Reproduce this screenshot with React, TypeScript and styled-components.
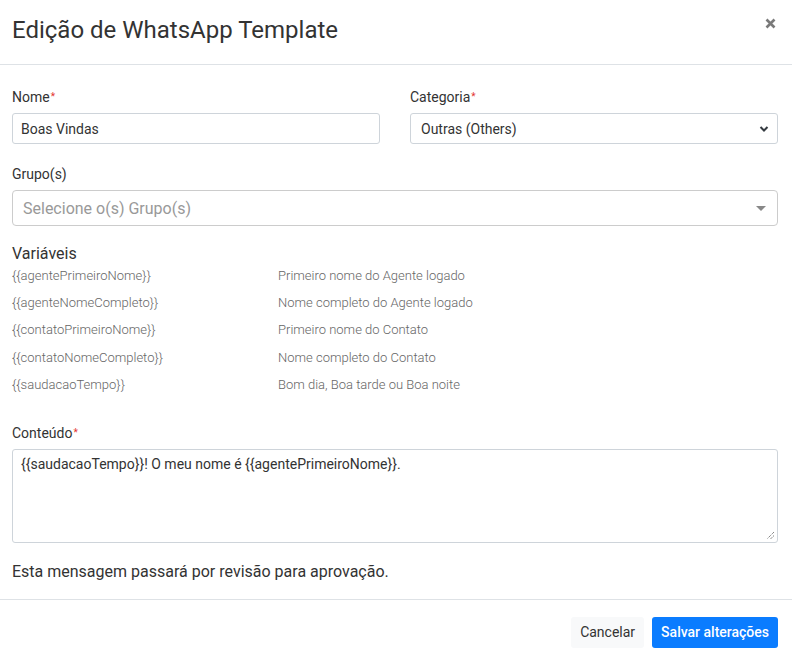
import React from "react";
import styled, { createGlobalStyle } from "styled-components";

const Global = createGlobalStyle`
  html, body { margin: 0; padding: 0; background: #fff; }
  body { font-family: Roboto, "Liberation Sans", sans-serif; color: #333; }
  * { box-sizing: border-box; }
`;

const Modal = styled.div`
  width: 792px;
  height: 661px;
  background: #fff;
  display: flex;
  flex-direction: column;
`;

const Header = styled.div`
  height: 65px;
  border-bottom: 1px solid #dee2e6;
  display: flex;
  align-items: center;
  justify-content: space-between;
  padding: 0 15px 4px 12px;
`;

const Title = styled.h4`
  margin: 0;
  font-size: 24px;
  font-weight: 400;
  color: #333;
`;

const Close = styled.button`
  border: 0;
  background: none;
  padding: 0;
  margin-top: -14px;
  width: 14px;
  height: 14px;
  display: flex;
  align-items: center;
  justify-content: center;
  cursor: pointer;
`;

const Body = styled.div`
  flex: 1;
  padding: 22px 14px 0 12px;
  display: flex;
  flex-direction: column;
`;

const Row = styled.div`
  display: grid;
  grid-template-columns: 1fr 1fr;
  column-gap: 30px;
`;

const Field = styled.div<{ $mb?: number; $mt?: number }>`
  display: flex;
  flex-direction: column;
  margin-bottom: ${(p) => p.$mb ?? 0}px;
  margin-top: ${(p) => p.$mt ?? 0}px;
`;

const Label = styled.label`
  font-size: 14px;
  color: #333;
  line-height: 20px;
  margin-bottom: 6px;
`;

const Req = styled.span`
  color: #e3342f;
  font-size: 10px;
  vertical-align: 2px;
  margin-left: 1px;
`;

const TextInput = styled.div`
  height: 31px;
  border: 1px solid #ced4da;
  border-radius: 3px;
  padding: 0 8px;
  font-size: 14px;
  color: #333;
  display: flex;
  align-items: center;
`;

const Select = styled(TextInput)`
  justify-content: space-between;
  padding: 0 8px 0 10px;
`;

const MultiSelect = styled.div`
  height: 36px;
  border: 1px solid #ccc;
  border-radius: 4px;
  padding: 0 11px 0 10px;
  display: flex;
  align-items: center;
  justify-content: space-between;
  font-size: 16px;
  color: #999;
`;

const Caret = styled.span`
  width: 0;
  height: 0;
  border-left: 5px solid transparent;
  border-right: 5px solid transparent;
  border-top: 5px solid #888;
`;

const VarTitle = styled.div`
  font-size: 16px;
  color: #333;
  line-height: 18px;
  margin-top: 19px;
`;

const VarGrid = styled.div`
  display: grid;
  grid-template-columns: 266px 1fr;
  grid-auto-rows: 27.3px;
  font-size: 13px;
  font-weight: 300;
  color: #666;
  margin-top: -1px;
  align-items: center;
  & > span { line-height: 20px; }
`;

const TextArea = styled.div`
  height: 94px;
  border: 1px solid #ced4da;
  border-radius: 3px;
  padding: 6px 8px;
  font-size: 14px;
  color: #333;
  position: relative;
`;

const Grip = styled.svg`
  position: absolute;
  right: 2px;
  bottom: 2px;
`;

const Note = styled.p`
  margin: 20px 0 0;
  font-size: 16px;
  color: #333;
  line-height: 18px;
`;

const Footer = styled.div`
  height: 62px;
  border-top: 1px solid #dee2e6;
  display: flex;
  justify-content: flex-end;
  align-items: center;
  gap: 8px;
  padding: 3px 14px 0 0;
`;

const Button = styled.button<{ $primary?: boolean }>`
  height: 31px;
  border: 0;
  border-radius: 3px;
  font-family: Roboto, "Liberation Sans", sans-serif;
  font-size: 14px;
  padding: 0 9px;
  background: ${(p) => (p.$primary ? "#0a7cff" : "#f8f9fa")};
  color: ${(p) => (p.$primary ? "#fff" : "#333")};
  font-weight: ${(p) => (p.$primary ? 500 : 400)};
`;

const vars: [string, string][] = [
  ["{{agentePrimeiroNome}}", "Primeiro nome do Agente logado"],
  ["{{agenteNomeCompleto}}", "Nome completo do Agente logado"],
  ["{{contatoPrimeiroNome}}", "Primeiro nome do Contato"],
  ["{{contatoNomeCompleto}}", "Nome completo do Contato"],
  ["{{saudacaoTempo}}", "Bom dia, Boa tarde ou Boa noite"],
];

export default function App() {
  return (
    <>
      <Global />
      <Modal>
        <Header>
          <Title>Edição de WhatsApp Template</Title>
          <Close aria-label="Fechar">
            <svg width="11" height="11" viewBox="0 0 11 11">
              <path d="M1.5 1.5 L9.5 9.5 M9.5 1.5 L1.5 9.5" stroke="#7a7a7a" strokeWidth="2.6" strokeLinecap="butt" />
            </svg>
          </Close>
        </Header>
        <Body>
          <Row>
            <Field $mb={20}>
              <Label>
                Nome<Req>*</Req>
              </Label>
              <TextInput>Boas Vindas</TextInput>
            </Field>
            <Field $mb={20}>
              <Label>
                Categoria<Req>*</Req>
              </Label>
              <Select>
                <span>Outras (Others)</span>
                <svg width="10" height="8" viewBox="0 0 10 8">
                  <path d="M1.5 2 L5 5.5 L8.5 2" fill="none" stroke="#343a40" strokeWidth="2" />
                </svg>
              </Select>
            </Field>
          </Row>
          <Field>
            <Label>Grupo(s)</Label>
            <MultiSelect>
              <span>Selecione o(s) Grupo(s)</span>
              <Caret />
            </MultiSelect>
          </Field>
          <VarTitle>Variáveis</VarTitle>
          <VarGrid>
            {vars.map(([k, v]) => (
              <React.Fragment key={k}>
                <span>{k}</span>
                <span>{v}</span>
              </React.Fragment>
            ))}
          </VarGrid>
          <Field $mt={25}>
            <Label>
              Conteúdo<Req>*</Req>
            </Label>
            <TextArea>
              {"{{saudacaoTempo}}! O meu nome é {{agentePrimeiroNome}}."}
              <Grip width="9" height="9" viewBox="0 0 9 9">
                <path d="M8 1 L1 8 M8 4.5 L4.5 8" stroke="#555" strokeWidth="1" strokeDasharray="1 1" />
              </Grip>
            </TextArea>
          </Field>
          <Note>Esta mensagem passará por revisão para aprovação.</Note>
        </Body>
        <Footer>
          <Button>Cancelar</Button>
          <Button $primary>Salvar alterações</Button>
        </Footer>
      </Modal>
    </>
  );
}
